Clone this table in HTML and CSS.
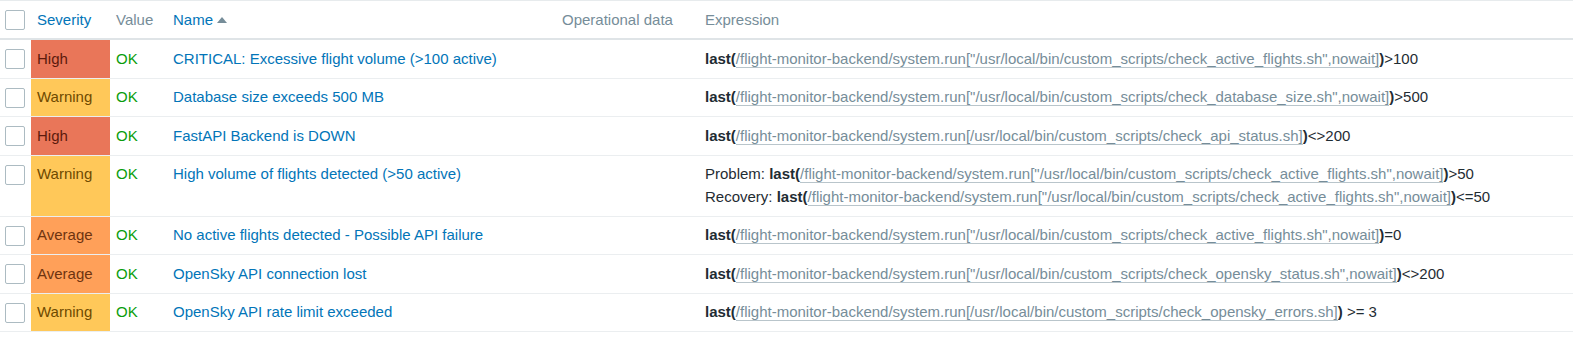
FILE: index.html
```html
<!DOCTYPE html>
<html>
<head>
<meta charset="utf-8">
<link rel="stylesheet" href="styles.css">
</head>
<body>
<table class="list">
  <colgroup>
    <col class="c-check"><col class="c-sev"><col class="c-val"><col class="c-name"><col class="c-op"><col>
  </colgroup>
  <thead>
    <tr>
      <th><span class="cb"></span></th>
      <th><a class="hlink">Severity</a></th>
      <th>Value</th>
      <th><a class="hlink">Name</a><span class="arrow"></span></th>
      <th>Operational data</th>
      <th>Expression</th>
    </tr>
  </thead>
  <tbody>
    <tr>
      <td><span class="cb"></span></td>
      <td class="sev high">High</td>
      <td class="ok">OK</td>
      <td><a class="link">CRITICAL: Excessive flight volume (&gt;100 active)</a></td>
      <td></td>
      <td><div class="expr"><b>last(</b><a class="ilink">/flight-monitor-backend/system.run["/usr/local/bin/custom_scripts/check_active_flights.sh",nowait]</a><b>)</b>&gt;100</div></td>
    </tr>
    <tr>
      <td><span class="cb"></span></td>
      <td class="sev warning">Warning</td>
      <td class="ok">OK</td>
      <td><a class="link">Database size exceeds 500 MB</a></td>
      <td></td>
      <td><div class="expr"><b>last(</b><a class="ilink">/flight-monitor-backend/system.run["/usr/local/bin/custom_scripts/check_database_size.sh",nowait]</a><b>)</b>&gt;500</div></td>
    </tr>
    <tr>
      <td><span class="cb"></span></td>
      <td class="sev high">High</td>
      <td class="ok">OK</td>
      <td><a class="link">FastAPI Backend is DOWN</a></td>
      <td></td>
      <td><div class="expr"><b>last(</b><a class="ilink">/flight-monitor-backend/system.run[/usr/local/bin/custom_scripts/check_api_status.sh]</a><b>)</b>&lt;&gt;200</div></td>
    </tr>
    <tr>
      <td><span class="cb"></span></td>
      <td class="sev warning">Warning</td>
      <td class="ok">OK</td>
      <td><a class="link">High volume of flights detected (&gt;50 active)</a></td>
      <td></td>
      <td>
        <div class="expr">Problem: <b>last(</b><a class="ilink">/flight-monitor-backend/system.run["/usr/local/bin/custom_scripts/check_active_flights.sh",nowait]</a><b>)</b>&gt;50</div>
        <div class="expr second">Recovery: <b>last(</b><a class="ilink">/flight-monitor-backend/system.run["/usr/local/bin/custom_scripts/check_active_flights.sh",nowait]</a><b>)</b>&lt;=50</div>
      </td>
    </tr>
    <tr>
      <td><span class="cb"></span></td>
      <td class="sev average">Average</td>
      <td class="ok">OK</td>
      <td><a class="link">No active flights detected - Possible API failure</a></td>
      <td></td>
      <td><div class="expr"><b>last(</b><a class="ilink">/flight-monitor-backend/system.run["/usr/local/bin/custom_scripts/check_active_flights.sh",nowait]</a><b>)</b>=0</div></td>
    </tr>
    <tr>
      <td><span class="cb"></span></td>
      <td class="sev average">Average</td>
      <td class="ok">OK</td>
      <td><a class="link">OpenSky API connection lost</a></td>
      <td></td>
      <td><div class="expr"><b>last(</b><a class="ilink">/flight-monitor-backend/system.run["/usr/local/bin/custom_scripts/check_opensky_status.sh",nowait]</a><b>)</b>&lt;&gt;200</div></td>
    </tr>
    <tr>
      <td><span class="cb"></span></td>
      <td class="sev warning">Warning</td>
      <td class="ok">OK</td>
      <td><a class="link">OpenSky API rate limit exceeded</a></td>
      <td></td>
      <td><div class="expr"><b>last(</b><a class="ilink">/flight-monitor-backend/system.run[/usr/local/bin/custom_scripts/check_opensky_errors.sh]</a><b>)</b> &gt;= 3</div></td>
    </tr>
  </tbody>
</table>
</body>
</html>
```
FILE: styles.css
```css
html, body {
  margin: 0;
  padding: 0;
  background: #ffffff;
}
body {
  font-family: "Liberation Sans", Arial, sans-serif;
  font-size: 15px;
  color: #1f2c33;
}
.list {
  width: 1573px;
  border-collapse: collapse;
  table-layout: fixed;
  border-top: 1px solid #e7ebed;
}
.c-check { width: 31px; }
.c-sev { width: 79px; }
.c-val { width: 57px; }
.c-name { width: 389px; }
.c-op { width: 143px; }
.list th {
  text-align: left;
  font-weight: normal;
  color: #768d99;
  padding: 10px 6px 10px 6px;
  line-height: 16px;
  border-bottom: 2px solid #dfe4e7;
  vertical-align: middle;
}
.list td {
  padding: 10.75px 6px;
  line-height: 16px;
  vertical-align: top;
  border-bottom: 1px solid #ebeef0;
}
.list th:first-child, .list td:first-child {
  padding: 0 0 0 5px;
  vertical-align: top;
}
.list td:first-child { padding-top: 9px; }
.list th:first-child { padding-top: 9px; padding-bottom: 8px; }
.cb {
  display: block;
  width: 18px;
  height: 18px;
  border: 1px solid #acbbc2;
  border-radius: 2px;
  background: #fff;
  box-sizing: content-box;
}
.hlink {
  color: #0275b8;
}
.arrow {
  display: inline-block;
  width: 0;
  height: 0;
  margin-left: 4px;
  vertical-align: 2px;
  border-left: 5px solid transparent;
  border-right: 5px solid transparent;
  border-bottom: 6px solid #768d99;
}
.high { background: #e97659; color: #5c1a0d; }
.warning { background: #ffc859; color: #6e4a00; }
.average { background: #ffa059; color: #6e3410; }
.ok { color: #0b9d0b; }
.link { color: #0275b8; }
.expr b { font-weight: bold; color: #1f2c33; }
.ilink {
  color: #768d99;
  border-bottom: 1px solid #b9c5cb;
}
.expr.second { margin-top: 6.5px; }
```
